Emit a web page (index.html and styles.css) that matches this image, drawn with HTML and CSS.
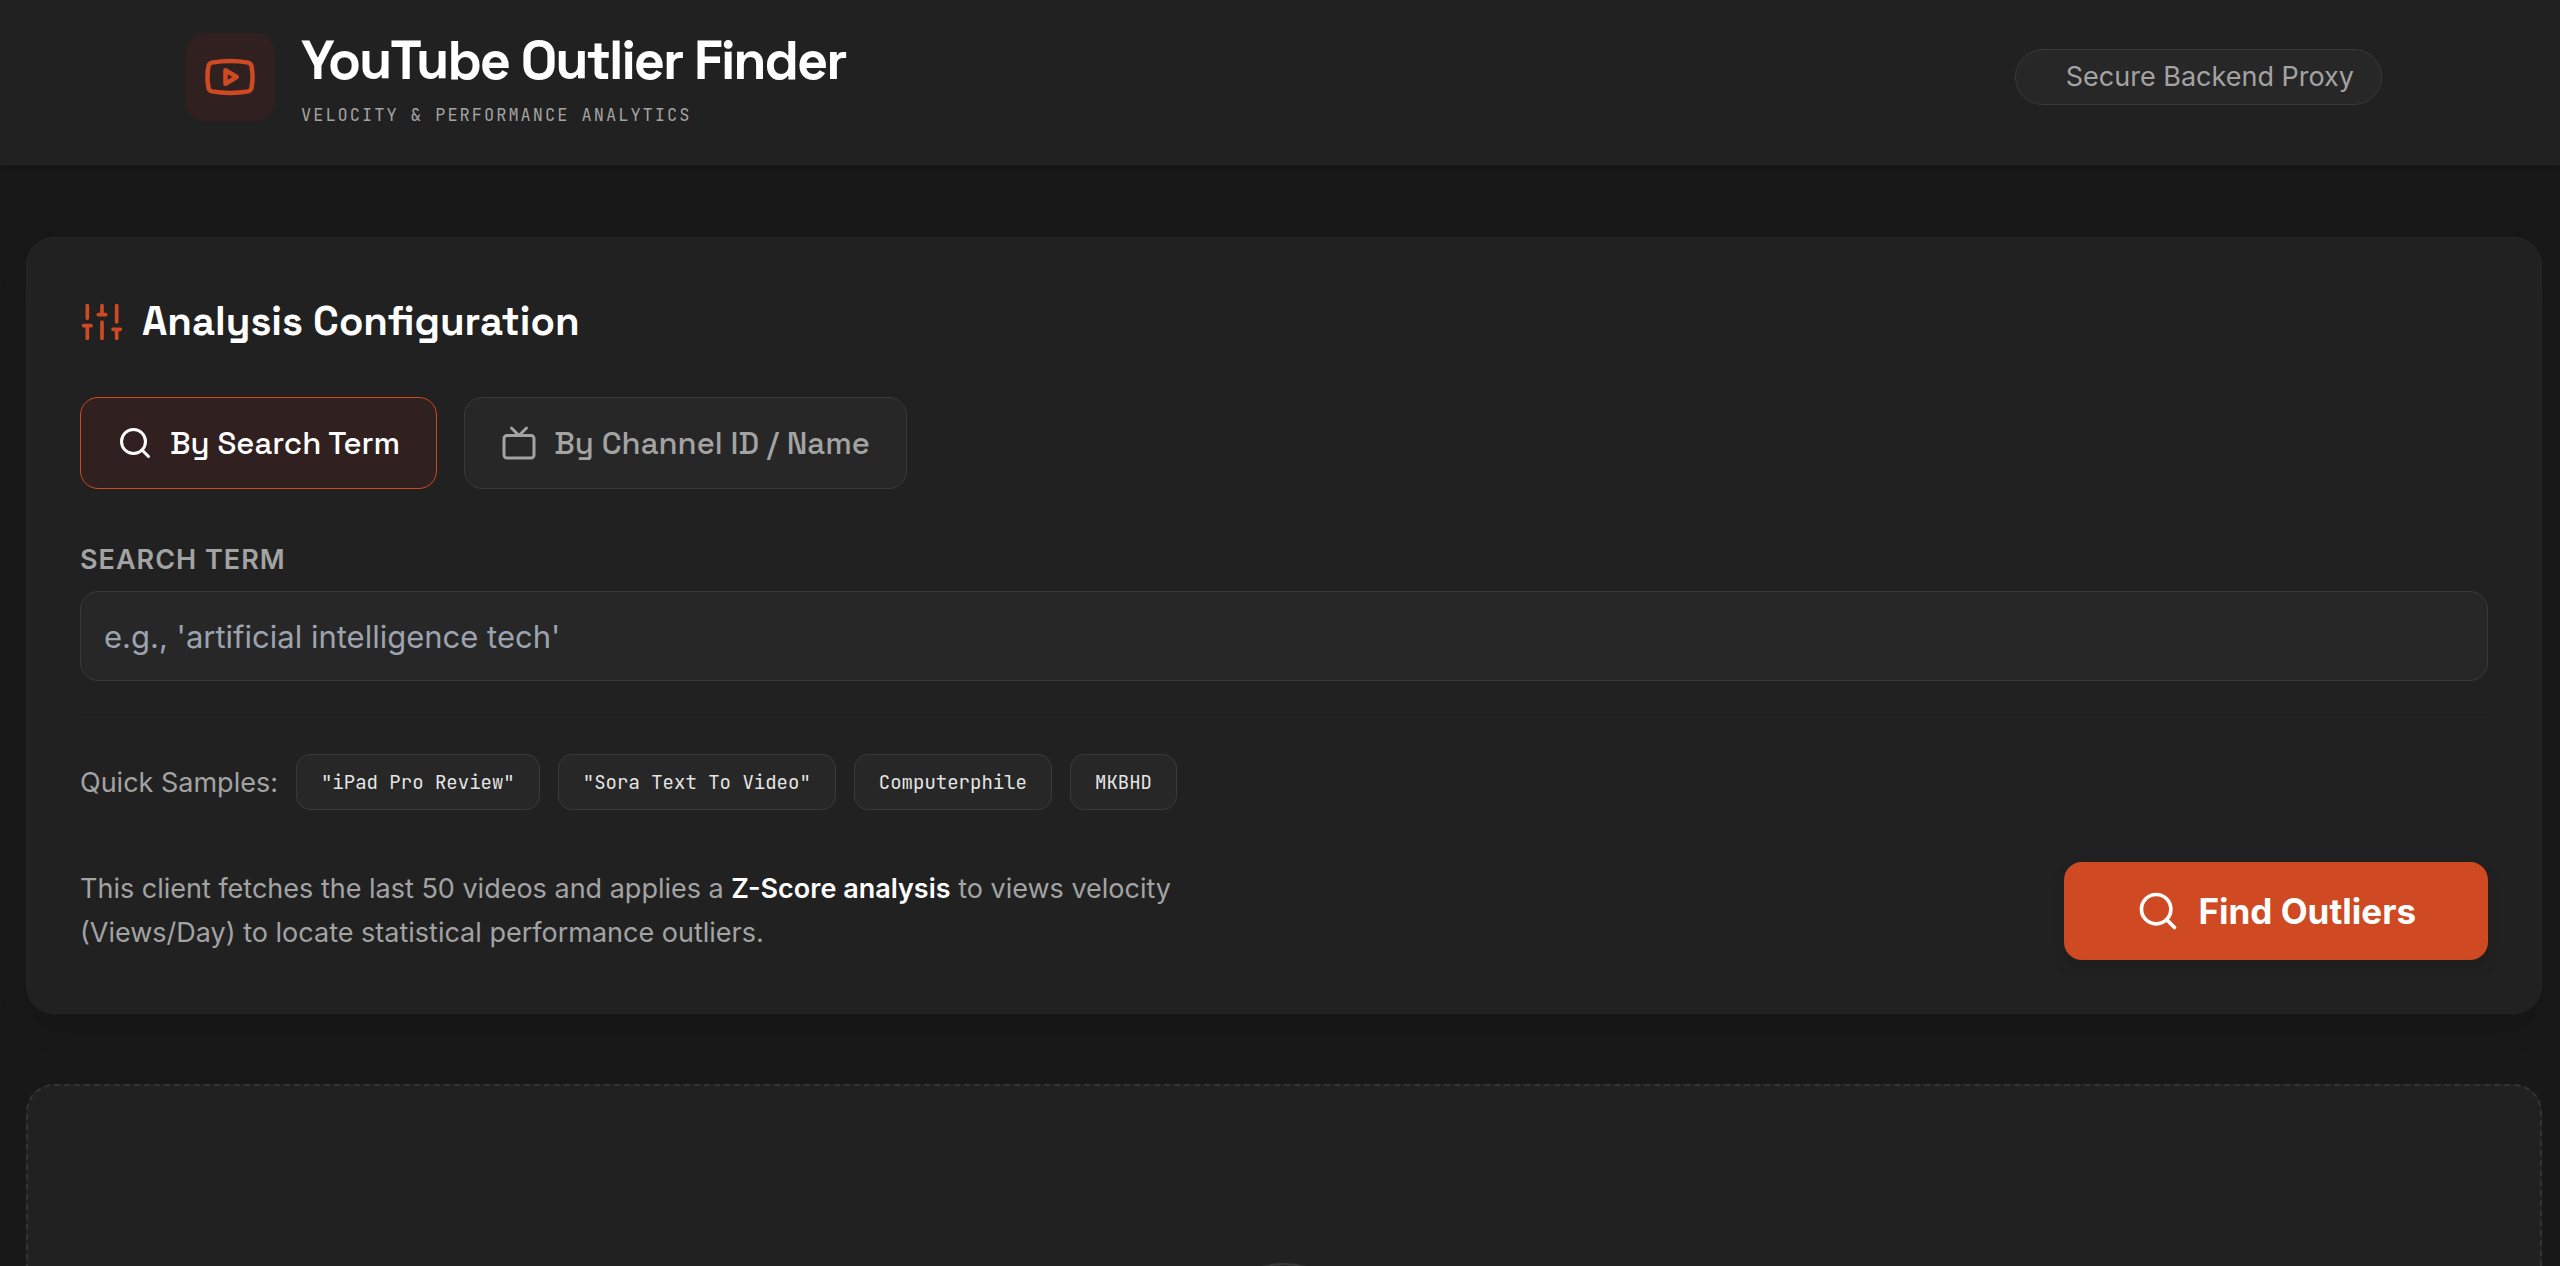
FILE: index.html
```html
<!DOCTYPE html>
<html lang="en">
<head>
  <meta charset="UTF-8">
  <meta name="viewport" content="width=device-width, initial-scale=1.0">
  <title>YouTube Outlier Finder</title>
  <link rel="stylesheet" href="styles.css">
</head>
<body>
  <header class="site-header">
    <div class="header-inner">
      <div class="brand">
        <div class="brand-logo">
          <svg class="icon icon-brand" viewBox="0 0 24 24" aria-hidden="true">
            <path d="M2.5 17a24.12 24.12 0 0 1 0-10 2 2 0 0 1 1.4-1.4 49.56 49.56 0 0 1 16.2 0A2 2 0 0 1 21.5 7a24.12 24.12 0 0 1 0 10 2 2 0 0 1-1.4 1.4 49.55 49.55 0 0 1-16.2 0A2 2 0 0 1 2.5 17"/>
            <path d="m10 15 5-3-5-3z"/>
          </svg>
        </div>
        <div class="brand-text">
          <h1>YouTube Outlier Finder</h1>
          <p>VELOCITY &amp; PERFORMANCE ANALYTICS</p>
        </div>
      </div>
      <div class="status-pill">Secure Backend Proxy</div>
    </div>
  </header>

  <main class="page">
    <form class="card config-card">
      <h2 class="card-title">
        <svg class="icon icon-lg" viewBox="0 0 24 24" aria-hidden="true">
          <path d="M4 21v-7M4 10V3M12 21v-9M12 8V3M20 21v-5M20 12V3M2 14h4M10 8h4M18 16h4"/>
        </svg>
        Analysis Configuration
      </h2>

      <div class="tabs">
        <button type="button" class="tab active">
          <svg class="icon" viewBox="0 0 24 24" aria-hidden="true">
            <circle cx="11" cy="11" r="8"/>
            <path d="m21 21-4.3-4.3"/>
          </svg>
          By Search Term
        </button>
        <button type="button" class="tab">
          <svg class="icon" viewBox="0 0 24 24" aria-hidden="true">
            <rect x="2" y="7" width="20" height="15" rx="2"/>
            <path d="m17 2-5 5-5-5"/>
          </svg>
          By Channel ID / Name
        </button>
      </div>

      <label class="field-label" for="search-term">SEARCH TERM</label>
      <input class="field-input" type="text" id="search-term" placeholder="e.g., 'artificial intelligence tech'">

      <div class="samples">
        <span>Quick Samples:</span>
        <button type="button" class="chip">"iPad Pro Review"</button>
        <button type="button" class="chip">"Sora Text To Video"</button>
        <button type="button" class="chip">Computerphile</button>
        <button type="button" class="chip">MKBHD</button>
      </div>

      <div class="card-footer">
        <p class="hint">This client fetches the last 50 videos and applies a <strong>Z-Score analysis</strong> to views velocity (Views/Day) to locate statistical performance outliers.</p>
        <button type="submit" class="submit-btn">
          <svg class="icon icon-lg" viewBox="0 0 24 24" aria-hidden="true">
            <circle cx="11" cy="11" r="8"/>
            <path d="m21 21-4.3-4.3"/>
          </svg>
          Find Outliers
        </button>
      </div>
    </form>

    <section class="card empty-card">
      <div class="empty-icon"></div>
    </section>
  </main>
</body>
</html>
```
FILE: styles.css
```css
:root {
  --bg: #181818;
  --card: #212121;
  --control: #272727;
  --line: #262626;
  --line-strong: #3a3a3a;
  --accent: #cf4a22;
  --accent-soft: #302120;
  --text: #ffffff;
  --muted: #a3a3a3;
  --heading: "Space Grotesk", Inter, sans-serif;
  --mono: "JetBrains Mono", "DejaVu Sans Mono", monospace;
}

* {
  box-sizing: border-box;
  margin: 0;
  padding: 0;
}

body {
  height: 100vh;
  overflow: hidden;
  background: var(--bg);
  color: var(--text);
  font-family: Inter, sans-serif;
  font-size: 27px;
}

button,
input {
  font: inherit;
  color: inherit;
}

button {
  cursor: pointer;
}

.icon {
  width: 36px;
  height: 36px;
  flex-shrink: 0;
  fill: none;
  stroke: currentColor;
  stroke-width: 2;
  stroke-linecap: round;
  stroke-linejoin: round;
}

.icon-lg {
  width: 44px;
  height: 44px;
}

.icon-brand {
  width: 54px;
  height: 54px;
}

/* Header */
.site-header {
  padding: 20px 18px 30px 26px;
  background: var(--card);
  border-bottom: 1px solid var(--line);
  box-shadow: 0 2px 6px rgba(0, 0, 0, 0.2);
}

.header-inner {
  display: flex;
  align-items: center;
  justify-content: space-between;
  max-width: 2196px;
  min-height: 114px;
  margin: 0 auto;
}

.brand {
  display: flex;
  align-items: center;
  gap: 27px;
}

.brand-logo {
  display: flex;
  align-items: center;
  justify-content: center;
  width: 88px;
  height: 88px;
  border-radius: 18px;
  background: var(--accent-soft);
  color: var(--accent);
}

.brand-text h1 {
  font-family: var(--heading);
  font-size: 54px;
  font-weight: 700;
  line-height: 68px;
  letter-spacing: -2px;
}

.brand-text p {
  margin-top: 8px;
  font-family: var(--mono);
  font-size: 17px;
  line-height: 24px;
  letter-spacing: 2px;
  color: var(--muted);
}

.status-pill {
  padding: 0 27px 0 50px;
  line-height: 54px;
  border: 1px solid var(--line-strong);
  border-radius: 28px;
  background: var(--control);
  color: var(--muted);
}

/* Cards */
.page {
  padding: 72px 18px 0 26px;
}

.card {
  background: var(--card);
  border: 1px solid var(--line);
  border-radius: 28px;
}

.config-card {
  padding: 53px;
  box-shadow: 0 18px 36px -8px rgba(0, 0, 0, 0.15);
}

.card-title {
  display: flex;
  align-items: center;
  gap: 18px;
  margin-bottom: 44px;
  font-family: var(--heading);
  font-size: 40px;
  font-weight: 600;
  line-height: 62px;
}

.card-title .icon {
  color: var(--accent);
}

.tabs {
  display: flex;
  gap: 27px;
  margin-bottom: 54px;
}

.tab {
  display: flex;
  align-items: center;
  gap: 17px;
  height: 92px;
  padding: 0 36px;
  border: 1px solid var(--line-strong);
  border-radius: 18px;
  background: var(--control);
  color: var(--muted);
  font-family: var(--heading);
  font-size: 31px;
  font-weight: 500;
}

.tab.active {
  border-color: var(--accent);
  background: var(--accent-soft);
  color: var(--text);
}

.field-label {
  display: block;
  margin-bottom: 14px;
  font-weight: 600;
  line-height: 34px;
  letter-spacing: 1px;
  color: var(--muted);
}

.field-input {
  display: block;
  width: 100%;
  height: 90px;
  padding: 0 23px;
  border: 1px solid var(--line-strong);
  border-radius: 18px;
  background: var(--control);
  font-size: 31px;
}

.field-input::placeholder {
  color: #9ca3af;
}

.samples {
  display: flex;
  align-items: center;
  flex-wrap: wrap;
  gap: 18px;
  margin-top: 36px;
  padding-top: 36px;
  border-top: 1px solid var(--line);
  color: var(--muted);
}

.chip {
  height: 56px;
  padding: 0 24px;
  border: 1px solid var(--line-strong);
  border-radius: 14px;
  background: var(--control);
  color: #e5e5e5;
  font-family: var(--mono);
  font-size: 19px;
}

.card-footer {
  display: flex;
  align-items: center;
  justify-content: space-between;
  margin-top: 52px;
}

.hint {
  max-width: 1120px;
  line-height: 44px;
  color: var(--muted);
}

.hint strong {
  font-weight: 600;
  color: var(--text);
}

.submit-btn {
  display: flex;
  align-items: center;
  gap: 18px;
  height: 98px;
  padding: 0 72px;
  border: 0;
  border-radius: 18px;
  background: var(--accent);
  font-size: 35px;
  font-weight: 700;
  box-shadow: 0 8px 16px rgba(0, 0, 0, 0.1);
}

/* Empty state */
.empty-card {
  display: flex;
  justify-content: center;
  margin-top: 70px;
  padding: 177px 53px;
  border: 2px dashed #333333;
}

.empty-icon {
  width: 144px;
  height: 144px;
  border: 2px solid var(--line-strong);
  border-radius: 50%;
  background: var(--control);
}
```
